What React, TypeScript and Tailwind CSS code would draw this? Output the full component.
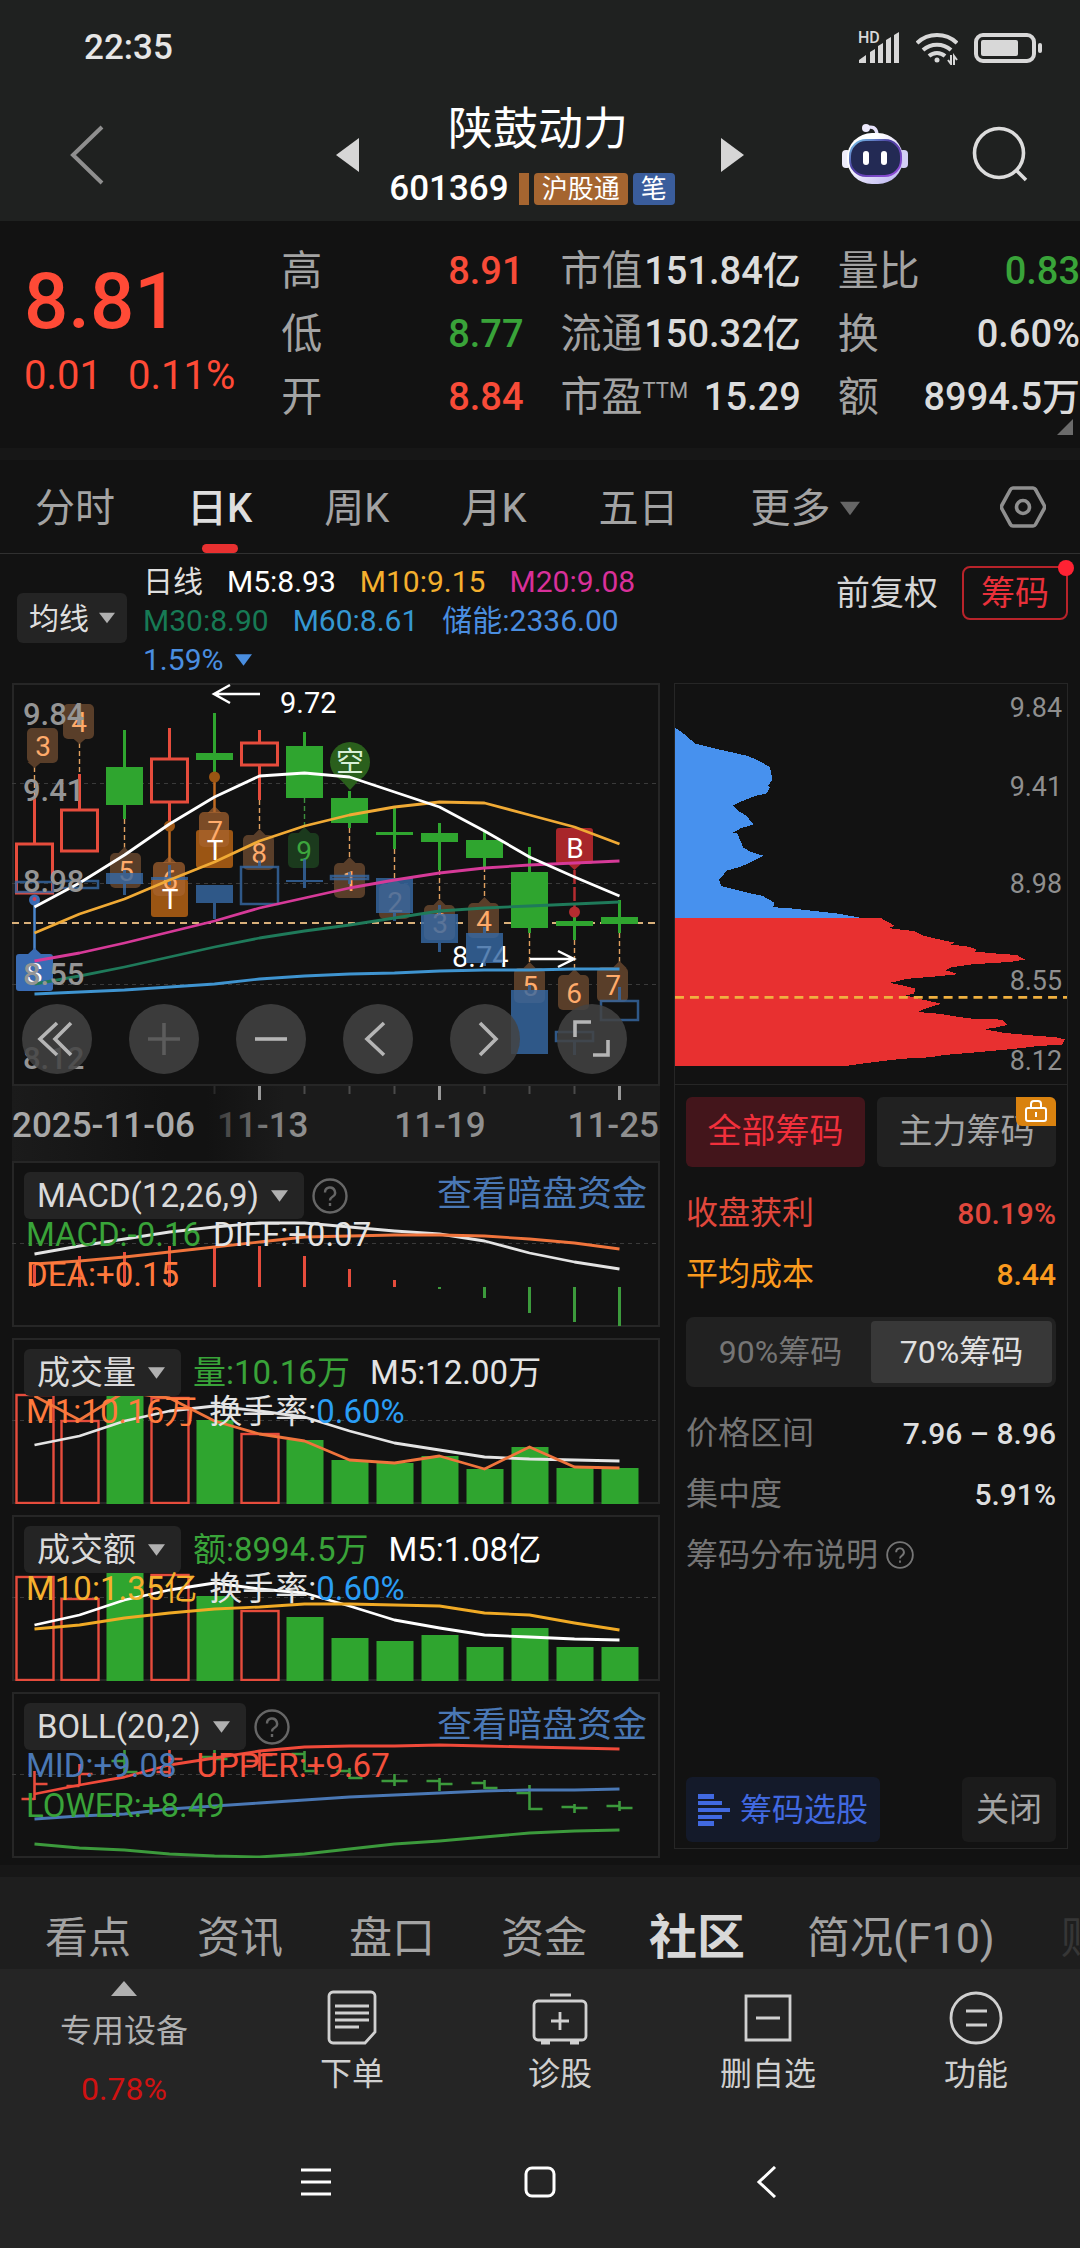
import React, { useState } from "react";

type Point = [number, number];

// Candles are spaced evenly, one for each trading day
const DAYS = [34.5, 79.5, 124.5, 169.5, 214.5, 259.5, 304.5, 349.5, 394.5, 439.5, 484.5, 529.5, 574.5, 619.5];

const RED = "#e64c3c";
const GREEN = "#2fa52f";

// [up, high, bodyTop, bodyBottom, low]
const candles: [boolean, number, number, number, number][] = [
  [true, 798, 843, 893, 893],
  [true, 774, 809, 851, 851],
  [false, 730, 767, 805, 819],
  [true, 728, 758, 802, 826],
  [false, 713, 753, 760, 777],
  [true, 730, 742, 765, 800],
  [false, 732, 746, 798, 798],
  [false, 791, 798, 823, 828],
  [false, 808, 832, 835, 849],
  [false, 823, 833, 842, 870],
  [false, 832, 840, 858, 867],
  [false, 847, 872, 928, 933],
  [false, 912, 921, 926, 940],
  [false, 900, 917, 924, 933],
];

// Sector candles drawn in blue. First value: hollow or not
const shadowCandles: [boolean, number, number, number, number][] = [
  [true, 881, 881, 892, 892],
  [true, 880, 880, 888, 888],
  [false, 870, 873, 884, 895],
  [false, 865, 877, 880, 885],
  [false, 885, 885, 903, 919],
  [true, 861, 866, 904, 904],
  [false, 859, 880, 882, 888],
  [true, 872, 875, 879, 884],
  [false, 878, 878, 913, 921],
  [false, 905, 914, 943, 952],
  [false, 927, 933, 963, 966],
  [false, 985, 990, 1054, 1054],
  [true, 1025, 1031, 1041, 1055],
  [true, 987, 1000, 1020, 1020],
];

// [label, x, y, dayIndex, dashFrom, dashTo, pointsDown]
const tags: [string, number, number, number, number, number, boolean][] = [
  ["3", 27, 728, 0, 767, 798, true],
  ["4", 63, 704, 1, 743, 774, true],
  ["5", 110, 853, 2, 819, 848, false],
  ["8", 243, 835, 5, 800, 830, false],
  ["9", 288, 833, 6, 798, 828, false],
  ["1", 334, 863, 7, 828, 858, false],
  ["2", 379, 884, 8, 849, 879, false],
  ["3", 424, 905, 9, 870, 900, false],
  ["4", 468, 903, 10, 867, 898, false],
  ["5", 514, 968, 11, 933, 963, false],
  ["6", 558, 975, 12, 940, 970, false],
  ["7", 597, 967, 13, 933, 963, false],
];

const ma5 = [907, 883, 855, 824, 797, 776, 773, 777, 792, 807, 831, 857, 877, 896];
const ma10 = [933, 914, 899, 880, 862, 841, 826, 815, 807, 802, 803, 815, 827, 844];
const ma20 = [961, 953, 943, 932, 921, 908, 898, 888, 880, 873, 868, 865, 863, 861];
const ma30 = [984, 976, 967, 957, 947, 938, 931, 925, 918, 911, 908, 906, 904, 902];
const ma60 = [994, 992, 990, 987, 984, 979, 976, 974, 973, 971, 970, 970, 969, 969];

const macdBars = [1265, 1256, 1252, 1246, 1247, 1246, 1256, 1269, 1280, 1289, 1298, 1313, 1322, 1326];
const diff = [1254, 1246, 1239, 1232, 1227, 1223, 1223, 1227, 1231, 1234, 1241, 1253, 1262, 1269];
const dea = [1264, 1261, 1257, 1252, 1247, 1242, 1237, 1236, 1235, 1235, 1236, 1239, 1243, 1249];

const volume = [1394, 1420, 1392, 1397, 1420, 1433, 1440, 1460, 1463, 1456, 1469, 1447, 1468, 1468];
const volumeM1 = [1396, 1420, 1392, 1398, 1421, 1434, 1441, 1460, 1463, 1456, 1469, 1447, 1467, 1468];
const volumeM5 = [1445, 1436, 1421, 1411, 1406, 1411, 1417, 1431, 1443, 1450, 1457, 1459, 1460, 1461];

const amount = [1576, 1598, 1569, 1574, 1596, 1610, 1617, 1638, 1641, 1635, 1647, 1628, 1647, 1647];
const amountM5 = [1625, 1615, 1600, 1590, 1583, 1589, 1593, 1606, 1620, 1628, 1635, 1637, 1639, 1640];
const amountM10 = [1629, 1625, 1618, 1613, 1609, 1607, 1604, 1604, 1605, 1606, 1613, 1615, 1623, 1630];

const bollUpper = [1794, 1785, 1777, 1765, 1758, 1751, 1747, 1746, 1746, 1745, 1746, 1747, 1748, 1749];
const bollMid = [1819, 1816, 1814, 1809, 1806, 1803, 1800, 1797, 1795, 1793, 1791, 1790, 1790, 1789];
const bollLower = [1844, 1848, 1850, 1854, 1856, 1857, 1854, 1849, 1844, 1841, 1837, 1833, 1831, 1830];

// [up, high, low, open, close]
const bollBars: [boolean, number, number, number, number][] = [
  [true, 1771, 1800, 1799, 1784],
  [true, 1764, 1786, 1786, 1774],
  [false, 1750, 1773, 1761, 1772],
  [true, 1750, 1778, 1772, 1759],
  [false, 1745, 1763, 1757, 1759],
  [true, 1751, 1771, 1761, 1755],
  [false, 1751, 1770, 1754, 1771],
  [false, 1768, 1779, 1771, 1778],
  [false, 1774, 1786, 1781, 1781],
  [false, 1778, 1791, 1781, 1784],
  [false, 1780, 1789, 1783, 1788],
  [false, 1785, 1810, 1793, 1809],
  [false, 1804, 1813, 1807, 1808],
  [false, 1801, 1811, 1806, 1808],
];

const chipsAbove: Point[] = [
  [45, 170], [75, 192], [105, 218], [185, 238], [265, 256], [305, 274], [331, 290], [339, 328],
  [325, 346], [331, 352], [321, 369], [285, 377], [245, 393], [219, 405], [240, 424], [262, 438],
  [282, 463], [243, 474], [219, 488], [233, 490], [251, 532], [275, 546], [313, 557], [275, 576],
  [243, 590], [203, 601], [178, 628], [184, 648], [230, 660], [275, 671], [309, 678], [344, 698],
  [341, 712], [388, 715], [461, 723], [533, 731], [567, 737], [606, 744], [45, 744],
];

const chipsBelow: Point[] = [
  [45, 744], [664, 744], [690, 758], [707, 768], [688, 775], [765, 784], [793, 798], [855, 812],
  [889, 819], [877, 825], [925, 830], [953, 839], [951, 846], [1003, 851], [1075, 856], [1100, 870],
  [1055, 877], [945, 884], [880, 893], [860, 902], [900, 914], [818, 922], [745, 928], [694, 940],
  [735, 949], [771, 958], [765, 973], [739, 978], [788, 990], [848, 1003], [800, 1018], [777, 1028],
  [848, 1034], [895, 1042], [940, 1048], [1030, 1051], [1047, 1067], [1011, 1075], [979, 1080],
  [1036, 1091], [1124, 1099], [1193, 1104], [1221, 1111], [1213, 1126], [1136, 1131], [1070, 1139],
  [960, 1149], [864, 1157], [809, 1165], [729, 1169], [663, 1177], [607, 1184], [552, 1192], [45, 1192],
];

const toPoints = (ys: number[]) => ys.map((y, i) => `${DAYS[i]},${y}`).join(" ");

const Line = ({ ys, color }: { ys: number[]; color: string }) => (
  <polyline points={toPoints(ys)} fill="none" stroke={color} strokeWidth="2.8" strokeLinejoin="round" />
);

const Grid = ({ y }: { y: number }) => (
  <line x1="12" x2="659" y1={y} y2={y} stroke="#3a3a3a" strokeDasharray="4 4" />
);

const Caret = ({ className }: { className?: string }) => (
  <svg viewBox="0 0 18 12" className={className} fill="currentColor" aria-hidden="true">
    <path d="M0 0h18L9 12z" />
  </svg>
);

const HelpButton = ({ className, label }: { className: string; label: string }) => (
  <button aria-label={label} className={className}>
    <svg viewBox="0 0 36 36" fill="none" stroke="currentColor" strokeWidth="2.4" className="w-full h-full">
      <circle cx="18" cy="18" r="16.5" />
      <path d="M13 14.5a5 5 0 1 1 7.5 4.3c-1.7 1-2.5 1.7-2.5 3.7" />
      <path d="M18 25v3" />
    </svg>
  </button>
);

const StatusBar = () => (
  <div className="flex justify-between items-center h-24 pl-[84px] pr-[38px] text-[#e6e6e6]">
    <span className="text-[35px] font-medium">22:35</span>
    <div className="flex items-center gap-4 text-[#d8d8d8]">
      <svg viewBox="0 0 42 32" className="w-[42px] h-8 overflow-visible" fill="currentColor">
        <text x="0" y="11" fontSize="16" fontWeight="500" fontFamily="Roboto">HD</text>
        <path d="M1 31v-3l7-5v8zM12 31V20l5-3v14zM20 31V14l5-3v20zM28 31V8l5-3v26zM36 31V3l5-3v31z" />
      </svg>
      <svg viewBox="0 0 42 33" className="w-[42px] h-[33px]" fill="none" stroke="currentColor" strokeWidth="4">
        <path d="M1 11a29 29 0 0 1 40 0M7 18a21 21 0 0 1 28 0M13 24a12 12 0 0 1 16 0" />
        <circle cx="21" cy="28" r="2.5" fill="currentColor" stroke="none" />
        <path d="M35 23v9l-3-4M38 33v-9l3 4" strokeWidth="2" />
      </svg>
      <svg viewBox="0 0 68 30" className="w-[68px] h-[30px]" fill="currentColor">
        <rect x="2" y="2" width="58" height="26" rx="7" fill="none" stroke="currentColor" strokeWidth="4" />
        <rect x="7" y="7" width="37" height="16" rx="2" />
        <rect x="64" y="10" width="4" height="10" rx="2" />
      </svg>
    </div>
  </div>
);

const Robot = () => (
  <svg viewBox="0 0 66 62" className="w-[66px] h-[62px]">
    <defs>
      <linearGradient id="shell" x1="0" y1="0" x2="1" y2="1">
        <stop offset="0.3" stopColor="#ffffff" />
        <stop offset="1" stopColor="#b5aef0" />
      </linearGradient>
      <linearGradient id="rim" x1="0" y1="0" x2="1" y2="1">
        <stop offset="0" stopColor="#7fd4f5" />
        <stop offset="0.4" stopColor="#4b3fa0" />
        <stop offset="1" stopColor="#9a4fe0" />
      </linearGradient>
    </defs>
    <path d="M24 5c6-2 10-1 11 6" fill="none" stroke="#e6e2fb" strokeWidth="3.4" />
    <circle cx="24" cy="5" r="4" fill="#ece9fc" />
    <rect x="0" y="27" width="9" height="18" rx="4" fill="#eeecfb" />
    <rect x="57" y="27" width="9" height="18" rx="4" fill="#d3cff5" />
    <rect x="5" y="10" width="56" height="51" rx="25" fill="url(#shell)" />
    <rect x="8" y="17" width="51" height="36" rx="16" fill="#232a54" stroke="url(#rim)" strokeWidth="2" />
    <rect x="21" y="28" width="6" height="14" rx="3" fill="#fff" />
    <rect x="39" y="28" width="6" height="14" rx="3" fill="#fff" />
  </svg>
);

const Header = () => (
  <header className="bg-[#1f2120]">
    <StatusBar />
    <div className="grid grid-cols-[1fr_auto_1fr] h-[125px]">
      <button aria-label="返回" className="flex items-center h-[118px] pl-[70px] text-[#8f8f8f]">
        <svg viewBox="0 0 34 60" className="w-[34px] h-[60px]" fill="none" stroke="currentColor" strokeWidth="4">
          <path d="M32 2L3 30l29 28" />
        </svg>
      </button>
      <div className="flex justify-between w-[408px] text-[#d6d6d6]">
        <button aria-label="上一只" className="flex items-center h-[118px]">
          <svg viewBox="0 0 23 34" className="w-[23px] h-[34px]" fill="currentColor"><path d="M23 0v34L0 17z" /></svg>
        </button>
        <div className="flex flex-col items-center pt-1 pr-1 text-white">
          <h1 className="text-[45px] leading-[60px]">陕鼓动力</h1>
          <div className="flex items-center gap-[5px] h-[58px] pr-3">
            <span className="text-[35px] font-medium leading-[40px] mr-[5px]">601369</span>
            <span className="w-[10px] h-8 bg-[#a56530]" />
            <span className="px-2 h-8 rounded-sm bg-[#a56530] text-[26px] leading-8">沪股通</span>
            <span className="px-2 h-8 rounded-sm bg-[#3a5d9c] text-[26px] leading-8">笔</span>
          </div>
        </div>
        <button aria-label="下一只" className="flex items-center h-[118px]">
          <svg viewBox="0 0 23 34" className="w-[23px] h-[34px]" fill="currentColor"><path d="M0 0v34l23-17z" /></svg>
        </button>
      </div>
      <div className="flex justify-end items-center gap-16 h-[116px] pr-[52px]">
        <button aria-label="智能助手"><Robot /></button>
        <button aria-label="搜索" className="text-[#dcdcdc]">
          <svg viewBox="0 0 56 56" className="w-14 h-14" fill="none" stroke="currentColor" strokeWidth="3.6">
            <circle cx="27" cy="27" r="24.5" />
            <path d="M44 44l10 10" />
          </svg>
        </button>
      </div>
    </div>
  </header>
);

const Stat = ({ label, value, color, sup }: { label: string; value: string; color?: string; sup?: string }) => (
  <div className="flex justify-between items-center h-[63px] whitespace-nowrap">
    <dt className="flex text-[#a3a3a3] text-[41px]">
      {label}
      {sup && <span className="text-[22px] leading-8 pt-2">{sup}</span>}
    </dt>
    <dd className={`text-[38px] font-medium ${color || "text-[#dcdcdc]"}`}>{value}</dd>
  </div>
);

const Quote = () => (
  <section className="relative grid grid-cols-[220fr_242fr_240fr_242fr] gap-x-[37px] pl-6 pt-[19px] pb-[19px]">
    <div className="text-[#ff4a36] whitespace-nowrap pt-4">
      <div className="text-[78px] leading-[92px] font-medium">8.81</div>
      <div className="flex gap-[26px] text-[40px] leading-[56px]">
        <span>0.01</span>
        <span>0.11%</span>
      </div>
    </div>
    <dl>
      <Stat label="高" value="8.91" color="text-[#f84b38]" />
      <Stat label="低" value="8.77" color="text-[#39a339]" />
      <Stat label="开" value="8.84" color="text-[#f84b38]" />
    </dl>
    <dl>
      <Stat label="市值" value="151.84亿" />
      <Stat label="流通" value="150.32亿" />
      <Stat label="市盈" sup="TTM" value="15.29" />
    </dl>
    <dl>
      <Stat label="量比" value="0.83" color="text-[#39a339]" />
      <Stat label="换" value="0.60%" />
      <Stat label="额" value="8994.5万" />
    </dl>
    <svg viewBox="0 0 16 16" className="absolute right-[7px] bottom-[13px] w-4 h-4" fill="#6b6b6b"><path d="M16 0v16H0z" /></svg>
  </section>
);

const periods = ["分时", "日K", "周K", "月K", "五日"];

const PeriodTabs = () => {
  const [active, setActive] = useState("日K");

  return (
    <nav className="flex items-center h-[94px] pl-[35px] pr-[34px] border-b border-[#303030] text-[40px] text-[#a3a3a3]">
      <div className="flex gap-[72px] flex-1">
        {periods.map((p) => (
          <button
            key={p}
            onClick={() => setActive(p)}
            className={`relative h-[93px] pt-1 ${active === p ? "text-[#dedede] font-medium" : ""}`}
          >
            {p}
            {active === p && (
              <span className="absolute bottom-0 left-1/2 -translate-x-1/2 w-9 h-[9px] rounded-full bg-[#e83030]" />
            )}
          </button>
        ))}
        <button className="flex items-center gap-[9px] pt-1">
          更多
          <Caret className="w-5 h-[17px] text-[#666]" />
        </button>
      </div>
      <button aria-label="设置">
        <svg viewBox="0 0 46 44" className="w-[46px] h-11" fill="none" stroke="#8f8f8f" strokeWidth="3.6">
          <path d="M13 3h20a3 3 0 0 1 2.500 1.500l8.500 15.500a4 4 0 0 1 0 4l-8.500 15.500a3 3 0 0 1-2.500 1.500H13a3 3 0 0 1-2.500-1.500L2 24a4 4 0 0 1 0-4l8.500-15.500A3 3 0 0 1 13 3z" />
          <circle cx="23" cy="22" r="6.500" />
        </svg>
      </button>
    </nav>
  );
};

const Legend = () => (
  <div className="flex items-start h-[129px] pl-[17px] pr-3">
    <button className="flex items-center gap-[10px] mt-[39px] h-[50px] px-3 rounded-md bg-[#242424] text-[30px] text-[#dedede]">
      均线
      <Caret className="w-4 h-3 text-[#b0b0b0]" />
    </button>
    <div className="pl-4 pt-2 text-[30px] leading-[39px] flex-1">
      <div className="flex gap-6">
        <span className="text-[#dedede]">日线</span>
        <span className="text-white">M5:8.93</span>
        <span className="text-[#f5b02e]">M10:9.15</span>
        <span className="text-[#d9309a]">M20:9.08</span>
      </div>
      <div className="flex gap-6">
        <span className="text-[#177a55]">M30:8.90</span>
        <span className="text-[#3597d3]">M60:8.61</span>
        <span className="text-[#4a8ee0]">储能:2336.00</span>
      </div>
      <div className="flex items-center gap-3 text-[#4a8ee0]">
        1.59%
        <Caret className="w-[17px] h-3" />
      </div>
    </div>
    <div className="flex items-center gap-6 mt-3">
      <button className="text-[34px] text-[#d6d6d6]">前复权</button>
      <button className="relative h-[54px] px-[17px] rounded-lg border-2 border-[#b8232a] text-[34px] leading-[50px] text-[#e8303a]">
        筹码
        <span className="absolute -top-2 -right-2 w-4 h-4 rounded-full bg-[#ff2233]" />
      </button>
    </div>
  </div>
);

const Tag = ({ tag }: { tag: (typeof tags)[number] }) => {
  const [label, x, y, day, from, to, down] = tag;
  const cx = DAYS[day];
  const green = label === "9";
  const bg = green ? "#1b3a1d" : "#593e29";
  return (
    <g>
      <line x1={cx} x2={cx} y1={from} y2={to} stroke={green ? "#3c8f3c" : "#e0a060"} strokeDasharray="5 3" strokeWidth="1.4" />
      <path d={down ? `M${cx - 7} ${y + 34}h14l-7 6z` : `M${cx - 7} ${y + 1}h14l-7 -7z`} fill={bg} />
      <rect x={x} y={y} width="31" height="35" rx="5" fill={bg} />
      <text x={x + 16} y={y + 28} textAnchor="middle" fontSize="28" fill={green ? "#3da63d" : "#ffab6b"}>{label}</text>
    </g>
  );
};

const controls: { label: string; d: string; dim?: boolean }[] = [
  { label: "最早", d: "M35 19L18 35l17 16M49 19L33 35l16 16" },
  { label: "放大", d: "M19 35h32M35 19v32", dim: true },
  { label: "缩小", d: "M19 35h32" },
  { label: "左移", d: "M41 19L24 35l17 16" },
  { label: "右移", d: "M30 19l16 16-16 16" },
  { label: "全屏", d: "M18 33V18h16M51 36v15H36" },
];

const KLineChart = () => (
  <div className="relative">
    <svg viewBox="12 683 648 403" className="block w-full h-auto" fontFamily="Roboto, 'Noto Sans CJK SC', sans-serif">
      <rect x="13" y="684" width="646" height="401" fill="none" stroke="#262626" strokeWidth="2" />
      <Grid y={783.5} />
      <Grid y={883.5} />
      <Grid y={984.5} />
      <line x1="12" x2="659" y1="923" y2="923" stroke="#d9b07a" strokeWidth="2" strokeDasharray="7 5" />

      {candles.map(([up, high, top, bottom, low], i) => (
        <g key={i} stroke={up ? RED : GREEN} fill={up ? "none" : GREEN}>
          <path d={`M${DAYS[i]} ${high}V${top}M${DAYS[i]} ${bottom}V${low}`} strokeWidth="3" />
          {up ? (
            <rect x={DAYS[i] - 18} y={top + 1} width="36" height={bottom - top - 1} strokeWidth="3" />
          ) : (
            <rect x={DAYS[i] - 18.5} y={top} width="37" height={bottom - top} stroke="none" />
          )}
        </g>
      ))}

      {tags.map((t, i) => <Tag key={i} tag={t} />)}

      {/* T marks */}
      <path d="M169.500 826V862M214.500 777V812" stroke="#c06a20" strokeWidth="2.500" />
      <g fill="#9b5513">
        <circle cx="169.500" cy="826" r="5.500" />
        <circle cx="214.500" cy="777" r="5.500" />
        <rect x="151" y="879" width="37" height="38" rx="3" />
        <rect x="196" y="830" width="37" height="38" rx="3" />
      </g>
      <g fill="#a8642f" fillOpacity="0.7">
        <path d="M162.500 863h14l-7 -7zM207.500 813h14l-7 -7z" />
        <rect x="153" y="862" width="32" height="34" rx="5" />
        <rect x="199" y="812" width="30" height="35" rx="5" />
      </g>
      <g textAnchor="middle" fontSize="28" fill="#ffab6b">
        <text x="170" y="890">6</text>
        <text x="215" y="841">7</text>
      </g>
      <g fill="#fff" textAnchor="middle" fontSize="28">
        <text x="170" y="909">T</text>
        <text x="215" y="860">T</text>
      </g>

      {/* short signal */}
      <path d="M338 777h24l-12 13z" fill="#2a5f1c" />
      <circle cx="350" cy="762" r="20" fill="#2a5f1c" />
      <text x="350" y="772" textAnchor="middle" fontSize="28" fill="#d8f0d8">空</text>

      {/* buy and sell marks */}
      <line x1="574.500" x2="574.500" y1="870" y2="908" stroke="#b52c30" strokeWidth="2.500" strokeDasharray="14 3" />
      <circle cx="574.500" cy="912" r="5.500" fill="#b52c30" />
      <path d="M567 863h15l-7.500 7z" fill="#a8262a" />
      <rect x="556" y="828" width="37" height="36" rx="3" fill="#a8262a" />
      <text x="575" y="858" textAnchor="middle" fontSize="28" fill="#fff">B</text>
      <line x1="34.500" x2="34.500" y1="903" y2="950" stroke="#4a86cc" strokeWidth="2.500" />
      <circle cx="34.500" cy="900" r="5.500" fill="#3a6cb4" />
      <circle cx="34.500" cy="899" r="2" fill="#d0405a" />
      <path d="M27 955h15l-7.500 -7z" fill="#3a6cb4" />
      <rect x="16" y="954" width="37" height="37" rx="3" fill="#3a6cb4" />
      <text x="34" y="983" textAnchor="middle" fontSize="28" fill="#fff">S</text>

      <g fill="none" stroke="#fff" strokeWidth="2.500">
        <path d="M260 694h-45M230 685l-16 9 16 9" />
        <path d="M530 959h44M558 951l16 8-16 8" />
      </g>
      <text x="280" y="713" fontSize="29" fill="#fff">9.72</text>
      <text x="452" y="967" fontSize="29" fill="#fff">8.74</text>

      {shadowCandles.map(([hollow, high, top, bottom, low], i) => (
        <g key={i} stroke="#3668a3" fill={hollow ? "none" : "#3668a3"} opacity="0.82">
          <path d={`M${DAYS[i]} ${high}V${top}M${DAYS[i]} ${bottom}V${low}`} strokeWidth="3" />
          {hollow ? (
            <rect x={DAYS[i] - 18.5} y={top + 1} width="37" height={bottom - top - 1} strokeWidth="2.5" />
          ) : (
            <rect x={DAYS[i] - 18.5} y={top} width="37" height={bottom - top} stroke="none" />
          )}
        </g>
      ))}

      <Line ys={ma60} color="#3f94d0" />
      <Line ys={ma30} color="#1f7a5a" />
      <Line ys={ma20} color="#d63a98" />
      <Line ys={ma10} color="#f0aa35" />
      <Line ys={ma5} color="#ffffff" />

      <g fontSize="31" fontWeight="500" fill="#959595">
        <text x="23" y="725">9.84</text>
        <text x="23" y="801">9.41</text>
        <text x="23" y="892">8.98</text>
        <text x="23" y="985">8.55</text>
        <text x="23" y="1069">8.12</text>
      </g>
    </svg>
    <div className="absolute left-[10px] bottom-3 flex gap-[37px]">
      {controls.map((c) => (
        <button key={c.label} aria-label={c.label} className="w-[70px] h-[70px] rounded-full bg-[#434343]/85">
          <svg viewBox="0 0 70 70" fill="none" stroke={c.dim ? "#5c5c5c" : "#b5b5b5"} strokeWidth="3.6" className="w-full h-full">
            <path d={c.d} />
          </svg>
        </button>
      ))}
    </div>
  </div>
);

const DateAxis = () => (
  <svg viewBox="12 1086 648 75" className="block w-full h-auto" fontFamily="Roboto, sans-serif">
    <defs>
      <linearGradient id="fade">
        <stop offset="0" stopColor="#1b1b1b" />
        <stop offset="0.24" stopColor="#121212" />
        <stop offset="0.3" stopColor="#121212" />
        <stop offset="0.42" stopColor="#1b1b1b" />
      </linearGradient>
      <linearGradient id="dim" gradientUnits="userSpaceOnUse" x1="216" x2="300" y1="0" y2="0">
        <stop offset="0" stopColor="#3a3a3a" />
        <stop offset="0.6" stopColor="#7a7a7a" />
        <stop offset="1" stopColor="#8f8f8f" />
      </linearGradient>
    </defs>
    <rect x="12" y="1086" width="648" height="75" fill="url(#fade)" />
    {DAYS.slice(4).map((x, i) => (
      <line
        key={x}
        x1={x}
        x2={x}
        y1="1086"
        y2={i % 4 === 1 ? 1100 : 1094}
        stroke={i === 0 ? "#2a2a2a" : i % 4 === 1 ? "#9a9a9a" : "#4a4a4a"}
        strokeWidth={i % 4 === 1 ? 3 : 2}
      />
    ))}
    <g fontSize="35" fontWeight="500" fill="#8f8f8f">
      <text x="12" y="1137" fill="#a8a8a8">2025-11-06</text>
      <text x="217" y="1137" fill="url(#dim)">11-13</text>
      <text x="440" y="1137" textAnchor="middle">11-19</text>
      <text x="659" y="1137" textAnchor="end">11-25</text>
    </g>
  </svg>
);

type PanelProps = {
  title: string;
  help?: boolean;
  top: number;
  inline?: React.ReactNode;
  lines: React.ReactNode;
  children: React.ReactNode;
};

// Chart and its texts share one grid cell, the texts lie on top
const Panel = ({ title, help, top, inline, lines, children }: PanelProps) => (
  <section className="grid [&>*]:[grid-area:1/1] text-[33px] whitespace-nowrap">
    <svg viewBox={`12 ${top} 648 166`} className="block w-full h-auto">
      <rect x="13" y={top + 1} width="646" height="164" fill="none" stroke="#262626" strokeWidth="2" />
      {children}
    </svg>
    <div className="pt-[11px] pl-3 pr-[13px]">
      <div className="flex items-center h-[47px]">
        <button className="flex items-center gap-3 h-[47px] pl-[13px] pr-4 rounded-md bg-[#242424] text-[#dadada]">
          {title}
          <Caret className="w-[17px] h-3 text-[#b0b0b0]" />
        </button>
        {inline}
        {help && (
          <>
            <HelpButton label={`${title}说明`} className="ml-2 w-9 h-9 text-[#666]" />
            <a href="#dark" className="ml-auto text-[35px] text-[#4a78b5]">查看暗盘资金</a>
          </>
        )}
      </div>
      <div className="pl-[2px] -mt-1 leading-10">{lines}</div>
    </div>
  </section>
);

const Bars = ({ tops, base }: { tops: number[]; base: number }) => (
  <>
    {tops.map((y, i) =>
      [0, 1, 3, 5].includes(i) ? (
        <rect key={i} x={DAYS[i] - 18} y={y + 1} width="37" height={base - y - 2} fill="none" stroke={RED} strokeWidth="2.4" />
      ) : (
        <rect key={i} x={DAYS[i] - 18} y={y} width="37" height={base - y} fill={GREEN} />
      )
    )}
  </>
);

const Indicators = () => (
  <div className="flex flex-col gap-[11px]">
    <Panel
      title="MACD(12,26,9)"
      help
      top={1161}
      lines={
        <>
          <div className="flex gap-3">
            <span className="text-[#39a339]">MACD:-0.16</span>
            <span className="text-[#e4e4e4]">DIFF:+0.07</span>
          </div>
          <div className="text-[#ff7a3d]">DEA:+0.15</div>
        </>
      }
    >
      <Grid y={1243.5} />
      {macdBars.map((y, i) => (
        <line key={i} x1={DAYS[i]} x2={DAYS[i]} y1="1287" y2={y} stroke={i < 9 ? RED : "#3c9a3c"} strokeWidth="3" />
      ))}
      <Line ys={diff} color="#e4e4e4" />
      <Line ys={dea} color="#f0743c" />
    </Panel>

    <Panel
      title="成交量"
      top={1338}
      inline={
        <>
          <span className="ml-3 text-[#39a339]">量:10.16万</span>
          <span className="ml-5 text-[#e4e4e4]">M5:12.00万</span>
        </>
      }
      lines={
        <div className="flex gap-3">
          <span className="text-[#ff7a3d]">M1:10.16万</span>
          <span className="text-[#e4e4e4]">换手率:<span className="text-[#2a9df4]">0.60%</span></span>
        </div>
      }
    >
      <Grid y={1420.5} />
      <Bars tops={volume} base={1504} />
      <Line ys={volumeM5} color="#e4e4e4" />
      <Line ys={volumeM1} color="#f0743c" />
    </Panel>

    <Panel
      title="成交额"
      top={1515}
      inline={
        <>
          <span className="ml-3 text-[#39a339]">额:8994.5万</span>
          <span className="ml-5 text-white">M5:1.08亿</span>
        </>
      }
      lines={
        <div className="flex gap-3">
          <span className="text-[#f5b02e]">M10:1.35亿</span>
          <span className="text-[#e4e4e4]">换手率:<span className="text-[#2a9df4]">0.60%</span></span>
        </div>
      }
    >
      <Grid y={1597.5} />
      <Bars tops={amount} base={1681} />
      <Line ys={amountM5} color="#ffffff" />
      <Line ys={amountM10} color="#f0aa25" />
    </Panel>

    <Panel
      title="BOLL(20,2)"
      help
      top={1692}
      lines={
        <>
          <div className="flex gap-5">
            <span className="text-[#4a78b5]">MID:+9.08</span>
            <span className="text-[#f4503c]">UPPER:+9.67</span>
          </div>
          <div className="text-[#39a339]">LOWER:+8.49</div>
        </>
      }
    >
      <Grid y={1774.5} />
      {bollBars.map(([up, high, low, open, close], i) => (
        <path
          key={i}
          d={`M${DAYS[i]} ${high}V${low}M${DAYS[i] - 13} ${open}h13M${DAYS[i]} ${close}h13`}
          stroke={up ? RED : "#3c9a3c"}
          strokeWidth="2.6"
        />
      ))}
      <Line ys={bollUpper} color="#f04a3a" />
      <Line ys={bollMid} color="#4a78b5" />
      <Line ys={bollLower} color="#3c9a3c" />
    </Panel>
  </div>
);

const ChipRow = ({ label, value, color }: { label: string; value: string; color?: string }) => (
  <div className={`flex justify-between items-center h-[61px] ${color || ""}`}>
    <dt className={color ? "" : "text-[#757575]"}>{label}</dt>
    <dd className={`text-[30px] font-medium ${color ? "" : "text-[#dedede]"}`}>{value}</dd>
  </div>
);

const ChipPanel = () => {
  const [range, setRange] = useState("70%");

  return (
    <aside className="flex flex-col mb-[9px] border border-[#262626] text-[32px] whitespace-nowrap">
      <svg viewBox="0 0 394 402" className="block w-full h-auto border-b border-[#262626]" fontFamily="Roboto, sans-serif">
        <g transform="translate(-15 -13) scale(0.33333)" shapeRendering="crispEdges">
          <polygon points={chipsAbove.join(" ")} fill="#4791ee" />
          <polygon points={chipsBelow.join(" ")} fill="#e83030" />
        </g>
        <line x1="0" x2="394" y1="315" y2="315" stroke="#f0b040" strokeWidth="2.6" strokeDasharray="9 6" />
        <g fontSize="27" fill="#8f8f8f" textAnchor="end">
          <text x="389" y="33">9.84</text>
          <text x="389" y="113">9.41</text>
          <text x="389" y="210">8.98</text>
          <text x="389" y="308">8.55</text>
          <text x="389" y="388">8.12</text>
        </g>
      </svg>
      <div className="flex flex-col flex-1 px-[11px] pt-3">
        <div className="grid grid-cols-2 gap-3 text-[34px]">
          <button className="h-[70px] rounded-md bg-[#43151b] text-[#f2303c]">全部筹码</button>
          <button className="relative h-[70px] rounded-md bg-[#212121] text-[#a3a3a3]">
            主力筹码
            <span className="absolute top-0 right-0 flex justify-center items-center w-10 h-[29px] rounded-bl-md rounded-tr-md bg-[#d9820f]">
              <svg viewBox="0 0 22 22" className="w-[22px] h-[22px]" fill="none" stroke="#fff" strokeWidth="2">
                <rect x="1" y="8" width="20" height="13" rx="2" />
                <path d="M6 8V4a3 3 0 0 1 3-3h4a3 3 0 0 1 3 3v4M11 12v5" />
              </svg>
            </span>
          </button>
        </div>
        <dl className="pt-4">
          <ChipRow label="收盘获利" value="80.19%" color="text-[#e0473c]" />
          <ChipRow label="平均成本" value="8.44" color="text-[#fa9a1e]" />
        </dl>
        <div className="grid grid-cols-2 mt-3 p-1 h-[70px] rounded-lg bg-[#212121]">
          {["90%", "70%"].map((r) => (
            <button
              key={r}
              onClick={() => setRange(r)}
              aria-pressed={range === r}
              className={`rounded ${range === r ? "bg-[#383838] text-[#e0e0e0]" : "text-[#757575]"}`}
            >
              {r}筹码
            </button>
          ))}
        </div>
        <dl className="pt-4">
          <ChipRow label="价格区间" value="7.96 – 8.96" />
          <ChipRow label="集中度" value="5.91%" />
        </dl>
        <div className="flex items-center gap-2 h-[61px] text-[#757575]">
          筹码分布说明
          <HelpButton label="筹码分布说明" className="w-[28px] h-[28px]" />
        </div>
        <div className="flex justify-between mt-auto mb-[6px]">
          <button className="flex items-center gap-[10px] h-[65px] px-3 rounded-md bg-[#141a2a] text-[#4169e0]">
            <svg viewBox="0 0 32 32" className="w-8 h-8" fill="currentColor">
              <path d="M0 0h16v5H0zM0 7h24v4H0zM0 14h32v4H0zM0 21h24v4H0zM0 27h16v5H0z" />
            </svg>
            筹码选股
          </button>
          <button className="h-[65px] px-[14px] rounded-md bg-[#1b1b1b] text-[33px] text-[#a3a3a3]">关闭</button>
        </div>
      </div>
    </aside>
  );
};

const SectionTabs = () => (
  <nav className="flex items-center gap-[66px] h-[92px] pt-[30px] pl-[45px] overflow-hidden whitespace-nowrap bg-[#1e1e1e] text-[43px] leading-[60px] text-[#a3a3a3]">
    <a href="#views">看点</a>
    <a href="#news">资讯</a>
    <a href="#depth">盘口</a>
    <a href="#funds">资金</a>
    <a href="#community" className="-mx-1 text-[48px] font-bold text-[#d8d8d8]">社区</a>
    <a href="#f10">简况(F10)</a>
    <a href="#finance" className="text-[#363636]">财务</a>
  </nav>
);

const actions = [
  {
    label: "下单",
    icon: (
      <path d="M9 3h38a4 4 0 0 1 4 4v36L41 54H9a4 4 0 0 1-4-4V7a4 4 0 0 1 4-4zM11 17h34M11 24h34M11 31h34M11 38h24" />
    ),
  },
  {
    label: "诊股",
    icon: <path d="M6 12h44a4 4 0 0 1 4 4v31a4 4 0 0 1-4 4H6a4 4 0 0 1-4-4V16a4 4 0 0 1 4-4zM18 6h21M28 23v18M19 32h18M9 54h9M38 54h9" />,
  },
  { label: "删自选", icon: <path d="M6 7h44v44H6zM16 29h24" /> },
  { label: "功能", icon: <path d="M28 4a25 25 0 1 1 0 50a25 25 0 1 1 0-50zM18 22h21M18 36h21" /> },
];

const Toolbar = () => (
  <footer className="flex-1 bg-[#252525] text-[32px]">
    <div className="grid grid-cols-[248fr_208fr_208fr_208fr_208fr] text-[#d0d0d0] leading-[42px]">
      <button className="flex flex-col items-center pt-3 text-[#b0b0b0]">
        <svg viewBox="0 0 26 15" className="w-[26px] h-[15px]" fill="currentColor"><path d="M13 0l13 15H0z" /></svg>
        <span className="mt-[14px]">专用设备</span>
        <span className="mt-4 text-[#d01212]">0.78%</span>
      </button>
      {actions.map((a) => (
        <button key={a.label} className="flex flex-col items-center pt-5">
          <svg viewBox="0 0 56 58" className="w-14 h-[58px]" fill="none" stroke="currentColor" strokeWidth="2.8">
            {a.icon}
          </svg>
          <span className="mt-[6px]">{a.label}</span>
        </button>
      ))}
    </div>
    <div className="flex justify-center gap-48 pt-[56px] pb-11 text-white">
      <button aria-label="最近任务">
        <svg viewBox="0 0 32 32" className="w-8 h-8" fill="none" stroke="currentColor" strokeWidth="3"><path d="M1 4h30M1 16h30M1 28h30" /></svg>
      </button>
      <button aria-label="主屏幕">
        <svg viewBox="0 0 32 32" className="w-8 h-8" fill="none" stroke="currentColor" strokeWidth="3"><rect x="2" y="2" width="28" height="28" rx="6" /></svg>
      </button>
      <button aria-label="后退">
        <svg viewBox="0 0 32 32" className="w-8 h-8" fill="none" stroke="currentColor" strokeWidth="3"><path d="M27 1L11 16l16 15" /></svg>
      </button>
    </div>
  </footer>
);

const App = () => {
  return (
    <div className="flex flex-col min-h-screen bg-[#121212] font-[Roboto,'Noto_Sans_CJK_SC',sans-serif]">
      <Header />
      <Quote />
      <div className="h-3 bg-[#171717]" />
      <PeriodTabs />
      <Legend />
      <main className="grid grid-cols-[648fr_394fr] gap-[14px] px-3">
        <div>
          <KLineChart />
          <DateAxis />
          <Indicators />
        </div>
        <ChipPanel />
      </main>
      <div className="h-3 mt-[7px] bg-[#171717]" />
      <SectionTabs />
      <Toolbar />
    </div>
  );
};

export default App;
